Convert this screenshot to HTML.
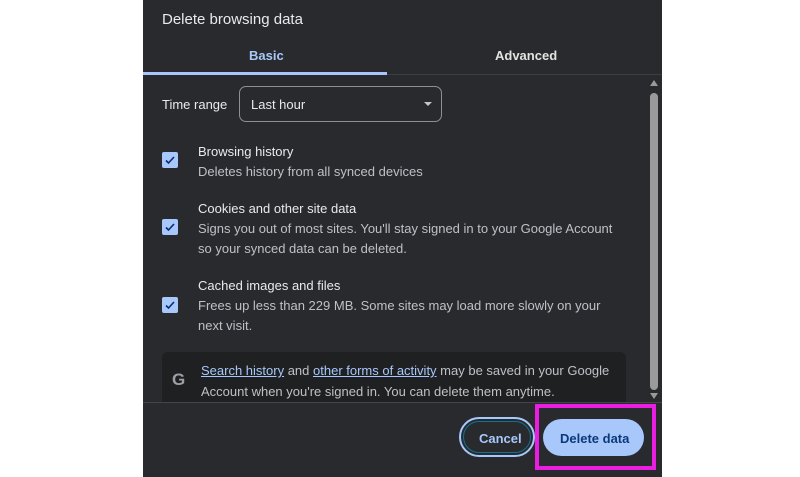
<!DOCTYPE html>
<html><head><style>
body{margin:0;width:800px;height:477px;background:#fff;position:relative;overflow:hidden;font-family:"Liberation Sans",Arial,sans-serif;}
.d{position:absolute;left:143px;top:0;width:519px;height:477px;background:#292a2d;color:#e3e3e3;}
.a{position:absolute;white-space:nowrap;}
.t{font-size:13px;color:#e8eaed}
.s{font-size:13px;color:#bdc1c6}
.cb{position:absolute;left:19px;width:16px;height:16px;background:#a8c7fa;border-radius:2px;}
.cb svg{position:absolute;left:0;top:0}
a{color:#a8c7fa;text-decoration:underline}
</style></head><body>
<div class="d">
<div class="a" style="left:19px;top:11px;font-size:15px;color:#e8eaed">Delete browsing data</div>
<div class="a" style="left:106px;top:48px;font-size:13px;font-weight:bold;color:#a8c7fa">Basic</div>
<div class="a" style="left:352px;top:48px;font-size:13px;font-weight:bold;color:#e3e3e3">Advanced</div>
<div class="a" style="left:0;top:74px;width:519px;height:1px;background:#3c3d40"></div>
<div class="a" style="left:0;top:72px;width:244px;height:3px;background:#a8c7fa"></div>
<div class="a t" style="left:19px;top:97px">Time range</div>
<div class="a" style="left:96px;top:86px;width:203px;height:36px;border:1px solid #8e918f;border-radius:7px;box-sizing:border-box"></div>
<div class="a t" style="left:108px;top:97px">Last hour</div>
<div class="a" style="left:281px;top:102px;width:0;height:0;border-left:4px solid transparent;border-right:4px solid transparent;border-top:4px solid #c4c7c5"></div>

<div class="cb" style="top:152px"><svg width="16" height="16"><path d="M4 8.5l2.5 2.5 5.5-6" stroke="#062e6f" stroke-width="1.6" fill="none"/></svg></div>
<div class="a t" style="left:55px;top:144px">Browsing history</div>
<div class="a s" style="left:55px;top:164px">Deletes history from all synced devices</div>

<div class="cb" style="top:219px"><svg width="16" height="16"><path d="M4 8.5l2.5 2.5 5.5-6" stroke="#062e6f" stroke-width="1.6" fill="none"/></svg></div>
<div class="a t" style="left:55px;top:201px">Cookies and other site data</div>
<div class="a s" style="left:55px;top:221px">Signs you out of most sites. You'll stay signed in to your Google Account</div>
<div class="a s" style="left:55px;top:241px">so your synced data can be deleted.</div>

<div class="cb" style="top:297px"><svg width="16" height="16"><path d="M4 8.5l2.5 2.5 5.5-6" stroke="#062e6f" stroke-width="1.6" fill="none"/></svg></div>
<div class="a t" style="left:55px;top:278px">Cached images and files</div>
<div class="a s" style="left:55px;top:298px">Frees up less than 229 MB. Some sites may load more slowly on your</div>
<div class="a s" style="left:55px;top:318px">next visit.</div>

<div class="a" style="left:19px;top:352px;width:464px;height:50px;background:#1f2022;border-radius:6px 6px 0 0"></div>
<div class="a" style="left:29px;top:370px;font-size:17px;font-weight:bold;color:#9aa0a6">G</div>
<div class="a s" style="left:58px;top:363px"><a>Search history</a> and <a>other forms of activity</a> may be saved in your Google</div>
<div class="a s" style="left:58px;top:384px">Account when you're signed in. You can delete them anytime.</div>

<div class="a" style="left:507px;top:93px;width:8px;height:297px;background:#9a9a9a;border-radius:4px"></div>
<div class="a" style="left:507px;top:80px;border-left:4px solid transparent;border-right:4px solid transparent;border-bottom:6px solid #9a9a9a"></div>
<div class="a" style="left:507px;top:393px;border-left:4px solid transparent;border-right:4px solid transparent;border-top:6px solid #9a9a9a"></div>

<div class="a" style="left:0;top:402px;width:519px;height:1px;background:#444548"></div>
<div class="a" style="left:316px;top:417px;width:76px;height:40px;border:2px solid #a8c7fa;border-radius:20px;box-sizing:border-box"></div>
<div class="a" style="left:320px;top:421px;width:68px;height:32px;border:1px solid #0e7490;border-radius:16px;box-sizing:border-box"></div>
<div class="a" style="left:336px;top:431px;font-size:13px;font-weight:bold;color:#a8c7fa">Cancel</div>
<div class="a" style="left:400px;top:419px;width:101px;height:37px;background:#a8c7fa;border-radius:19px"></div>
<div class="a" style="left:417px;top:431px;font-size:13px;font-weight:bold;color:#0b3a7a">Delete data</div>
<div class="a" style="left:392px;top:404px;width:121px;height:66px;border:4px solid #e91ee0;box-sizing:border-box"></div>
</div>
</body></html>
